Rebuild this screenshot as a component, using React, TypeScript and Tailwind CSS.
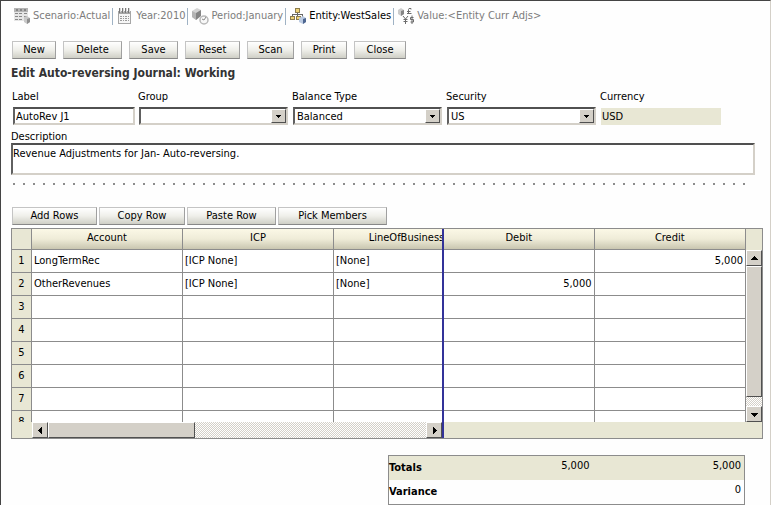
import React, { useState } from "react";

const povItems = [
  { id: "scenario", text: "Scenario:Actual", active: false },
  { id: "year", text: "Year:2010", active: false },
  { id: "period", text: "Period:January", active: false },
  { id: "entity", text: "Entity:WestSales", active: true },
  { id: "value", text: "Value:<Entity Curr Adjs>", active: false },
];

const actions = [
  { name: "New", width: "w-11" },
  { name: "Delete", width: "w-[59px]" },
  { name: "Save", width: "w-[49px]" },
  { name: "Reset", width: "w-[55px]" },
  { name: "Scan", width: "w-[47px]" },
  { name: "Print", width: "w-[46px]" },
  { name: "Close", width: "w-[52px]" },
];

const rowActions = [
  { name: "Add Rows", width: "w-[85px]" },
  { name: "Copy Row", width: "w-[86px]" },
  { name: "Paste Row", width: "w-[89px]" },
  { name: "Pick Members", width: "w-[109px]" },
];

const rows = [
  { account: "LongTermRec", icp: "[ICP None]", lob: "[None]", debit: "", credit: "5,000" },
  { account: "OtherRevenues", icp: "[ICP None]", lob: "[None]", debit: "5,000", credit: "" },
  { account: "", icp: "", lob: "", debit: "", credit: "" },
  { account: "", icp: "", lob: "", debit: "", credit: "" },
  { account: "", icp: "", lob: "", debit: "", credit: "" },
  { account: "", icp: "", lob: "", debit: "", credit: "" },
  { account: "", icp: "", lob: "", debit: "", credit: "" },
  { account: "", icp: "", lob: "", debit: "", credit: "" },
];

const sunken =
  "border-2 border-t-[#505050] border-l-[#606060] border-r-[#d4d0c8] border-b-[#d4d0c8] bg-white";
const raised =
  "border border-t-white border-l-white border-r-[#505050] border-b-[#505050] bg-[#d4d0c8]";
const track =
  "bg-[repeating-conic-gradient(#d4d0c8_0_25%,#ffffff_0_50%)] bg-[length:2px_2px]";
const headCell =
  "h-[21px] border-b border-[#8c8c8c] bg-linear-to-b from-[#fbf8e6] via-[#efecd8] to-[#c9c6b0] p-0 pb-0.5 text-center font-normal";
const cell = "h-[23px] border-b border-[#8c8c8c] p-0 truncate";

const PovIcon = ({ id }: { id: string }) => (
  <svg width="17" height="17" viewBox="0 0 17 17" className="shrink-0" shapeRendering="crispEdges">
    {id === "scenario" && (
      <>
        <path d="M0 0h14v4H0z" fill="#b5b5b5" />
        <path d="M2 1h2v2H2zM6 1h2v2H6zM10 1h2v2h-2z" fill="#858585" />
        <path d="M0 4h14v9H0z" fill="#e6e6e6" />
        <path d="M1 5h3v1H1zM5 5h3v1H5zM10 5h3v1h-3zM1 8h3v1H1zM5 8h3v1H5zM10 8h3v1h-3zM1 11h3v1H1zM5 11h3v1H5z" fill="#888888" />
        <g shapeRendering="auto">
          <path d="M10 9l3-1 3 2v4l-3 2-3-2z" fill="#c8c8c8" />
          <path d="M13 11l3-1v4l-3 2z" fill="#8f8f8f" />
        </g>
      </>
    )}
    {id === "year" && (
      <>
        <path d="M1 3h13v13H1z" fill="#a6a6a6" />
        <path d="M2 6h11v9H2z" fill="#f6f6f6" />
        <path d="M2 0h1v5H2zM5 0h1v5H5zM8 0h1v5H8zM11 0h1v5h-1z" fill="#777777" />
        <path d="M3 0h1v4H3zM6 0h1v4H6zM9 0h1v4H9zM12 0h1v4h-1z" fill="#d8d8d8" />
        <path d="M3 8h2v1H3zM6 8h1v1H6zM8 8h2v1H8zM11 8h1v1h-1zM3 10h2v1H3zM6 10h1v1H6zM8 10h2v1H8zM11 10h1v1h-1zM3 12h2v1H3zM6 12h1v1H6zM8 12h2v1H8zM11 12h1v1h-1z" fill="#9a9a9a" />
      </>
    )}
    {id === "period" && (
      <g shapeRendering="auto">
        <path d="M0 3l5-3 4 2v6l-5 4-4-3z" fill="#d4d4d4" />
        <path d="M0 3l4 2v7L0 9z" fill="#b4b4b4" />
        <path d="M4 5l5-3v6l-5 4z" fill="#858585" />
        <circle cx="12" cy="12" r="4" fill="#f8f8f8" stroke="#b8b8b8" strokeWidth="1.5" />
        <path d="M10 11l2 1 2-3" fill="none" stroke="#888888" />
      </g>
    )}
    {id === "entity" && (
      <>
        <path d="M7 4h1v3H7zM2 6h11v1H2zM2 6h1v3H2zM7 6h1v3H7zM12 6h1v3h-1z" fill="#666666" />
        <path d="M5 0h5v5H5zM0 8h5v4H0zM6 8h5v4H6z" fill="#8c7c4c" />
        <path d="M6 1h3v3H6zM1 9h3v2H1zM7 9h3v2H7z" fill="#f0d478" />
        <g shapeRendering="auto">
          <path d="M9 10l4-2 3 2v4l-3 2-4-2z" fill="#bccbe2" />
          <path d="M13 11l3-1v4l-3 2z" fill="#4d6690" />
        </g>
      </>
    )}
    {id === "value" && (
      <g shapeRendering="auto" fill="none" stroke="#6c6c6c">
        <path d="M0 2l3-2 3 2v4L3 8 0 6z" fill="#cccccc" stroke="none" />
        <path d="M3 3l3-1v4L3 8z" fill="#858585" stroke="none" />
        <path d="M13 1.5V.5h-2l-.5 1v4M9 3.5h3.5M9 5.5h4.5" />
        <path d="M5 8l2.5 3L10 8M7.5 11v5M5.5 11.5h4M5.5 13.5h4" />
        <path d="M15.5 9.5h-3v2h3v2.5h-3M14 7.5v8.500" />
      </g>
    )}
  </svg>
);

const PushButton = ({ name, width }: { name: string; width: string }) => (
  <button
    className={`${width} h-[18px] border border-t-[#c4c4c4] border-l-[#c4c4c4] border-r-[#a0a0a0] border-b-[#888888] bg-linear-to-b from-white via-[#efefea] to-[#cfcfc6] text-center leading-4 whitespace-nowrap`}
  >
    {name}
  </button>
);

const Arrow = ({ dir }: { dir: "up" | "down" | "left" | "right" }) => (
  <svg width="7" height="7" viewBox="0 0 7 7" fill="#000000" shapeRendering="crispEdges">
    {dir === "up" && <path d="M3 1h1v1h1v1h1v1h1v1H0V4h1V3h1V2h1z" />}
    {dir === "down" && <path d="M0 2h7v1H6v1H5v1H4v1H3V5H2V4H1V3H0z" />}
    {dir === "left" && <path d="M5 0v7H4V6H3V5H2V4H1V3h1V2h1V1h1V0z" />}
    {dir === "right" && <path d="M2 0v7h1V6h1V5h1V4h1V3H5V2H4V1H3V0z" />}
  </svg>
);

const ScrollButton = ({ dir }: { dir: "up" | "down" | "left" | "right" }) => (
  <button
    aria-label={`Scroll ${dir}`}
    className={`${raised} flex h-4 w-4 shrink-0 items-center justify-center`}
  >
    <Arrow dir={dir} />
  </button>
);

const SelectField = ({ label, options }: { label: string; options: string[] }) => {
  const id = label.toLowerCase().replace(" ", "-");
  return (
    <div className="min-w-0 flex-[150]">
      <label htmlFor={id} className="block h-4 leading-3">
        {label}
      </label>
      <div className="relative ml-px">
        <select
          id={id}
          className={`${sunken} block h-[18px] w-full appearance-none pt-px pl-0.5 leading-[13px] outline-none`}
        >
          {options.map((o) => (
            <option key={o}>{o}</option>
          ))}
        </select>
        <span
          className={`${raised} pointer-events-none absolute top-0.5 right-0.5 flex h-3.5 w-[15px] items-center justify-center`}
        >
          <svg width="5" height="3" viewBox="0 0 5 3" shapeRendering="crispEdges">
            <path d="M0 0h5v1H4v1H3v1H2V2H1V1H0z" />
          </svg>
        </span>
      </div>
    </div>
  );
};

const JournalGrid = () => (
  <div className="grid grid-cols-[20px_minmax(0,410fr)_2px_minmax(0,301fr)_17px] border border-[#8c8c8c] bg-[#e8e7d4]">
    {/* ROW NUMBERS */}
    <div className="h-[193px] overflow-hidden border-r border-[#8c8c8c]">
      <table className="w-full table-fixed border-separate border-spacing-0">
        <thead>
          <tr>
            <th aria-label="Row" className="h-[21px] border-b border-[#8c8c8c] p-0" />
          </tr>
        </thead>
        <tbody>
          {rows.map((_, i) => (
            <tr key={i}>
              <td className="h-[23px] border-b border-[#8c8c8c] p-0 text-center">{i + 1}</td>
            </tr>
          ))}
        </tbody>
      </table>
    </div>

    {/* MEMBERS */}
    <div className="h-[193px] overflow-hidden bg-white">
      <table className="w-[453px] table-fixed border-separate border-spacing-0">
        <thead>
          <tr>
            <th className={`${headCell} border-r`}>Account</th>
            <th className={`${headCell} border-r`}>ICP</th>
            <th className={`${headCell} pr-1.5`}>LineOfBusiness</th>
          </tr>
        </thead>
        <tbody>
          {rows.map((r, i) => (
            <tr key={i}>
              <td className={`${cell} border-r pl-0.5`}>{r.account}</td>
              <td className={`${cell} border-r pl-0.5`}>{r.icp}</td>
              <td className={`${cell} border-r pl-0.5`}>{r.lob}</td>
            </tr>
          ))}
        </tbody>
      </table>
    </div>

    <div className="row-span-2 bg-[#333399]" />

    {/* AMOUNTS */}
    <div className="h-[193px] overflow-hidden bg-white">
      <table className="w-full table-fixed border-separate border-spacing-0">
        <thead>
          <tr>
            <th className={`${headCell} border-r`}>Debit</th>
            <th className={headCell}>Credit</th>
          </tr>
        </thead>
        <tbody>
          {rows.map((r, i) => (
            <tr key={i}>
              <td className={`${cell} border-r pr-0.5 text-right`}>{r.debit}</td>
              <td className={`${cell} pr-0.5 text-right`}>{r.credit}</td>
            </tr>
          ))}
        </tbody>
      </table>
    </div>

    <div className="flex h-[193px] flex-col border-l border-[#8c8c8c]">
      <div className="h-[21px] shrink-0" />
      <div className={`${track} flex grow flex-col`}>
        <ScrollButton dir="up" />
        <div className={`${raised} h-[131px]`} />
        <div className="grow" />
        <ScrollButton dir="down" />
      </div>
    </div>

    {/* HORIZONTAL SCROLL */}
    <div />
    <div className={`${track} flex h-4`}>
      <ScrollButton dir="left" />
      <div className={`${raised} w-[147px]`} />
      <div className="grow" />
      <ScrollButton dir="right" />
    </div>
    <div className="col-span-2" />
  </div>
);

const App: React.FC = () => {
  const [label, setLabel] = useState("AutoRev J1");
  const [description, setDescription] = useState(
    "Revenue Adjustments for Jan- Auto-reversing."
  );

  return (
    <div className="min-h-screen border-t border-r border-l border-t-[#444444] border-r-[#d4d0c8] border-l-[#444444] bg-[#fefefe] pr-[7px] pl-2.5 font-['DejaVu_Sans_Condensed','DejaVu_Sans',sans-serif] text-[11px] leading-4 text-black">
      {/* POINT OF VIEW */}
      <nav className="flex h-[30px] items-center pl-[3px]">
        {povItems.map((p, i) => (
          <a
            key={p.id}
            href="#"
            className={`flex items-center gap-0.5 whitespace-nowrap ${
              i > 0 ? "ml-0.5 border-l border-[#9fb2c4] pl-1" : ""
            } ${p.active ? "text-black" : "text-[#7c7c7c]"}`}
          >
            <PovIcon id={p.id} />
            {p.text}
          </a>
        ))}
      </nav>

      <div className="flex gap-[7px] pt-2.5 pl-px">
        {actions.map((a) => (
          <PushButton key={a.name} {...a} />
        ))}
      </div>

      <h1 className="mt-1.5 text-[12px] leading-[17px] font-bold text-[#333333]">
        Edit Auto-reversing Journal: Working
      </h1>

      {/* JOURNAL HEADER */}
      <div className="mt-[9px] mr-[42px] flex gap-1 pl-px">
        <div className="min-w-0 flex-[122]">
          <label htmlFor="label" className="block h-4 leading-3">
            Label
          </label>
          <input
            id="label"
            value={label}
            onChange={(e) => setLabel(e.target.value)}
            className={`${sunken} ml-px block h-[18px] w-full pt-px pl-px leading-[13px] outline-none`}
          />
        </div>
        <SelectField label="Group" options={[""]} />
        <SelectField label="Balance Type" options={["Balanced", "Unbalanced"]} />
        <SelectField label="Security" options={["US"]} />
        <div className="min-w-0 flex-[121]">
          <span className="block h-4 leading-3">Currency</span>
          <output className="mt-px ml-px block h-[17px] bg-[#e8e7d4] pl-px leading-[18px]">
            USD
          </output>
        </div>
      </div>

      <label htmlFor="description" className="mt-1 block h-3.5 leading-4">
        Description
      </label>
      <textarea
        id="description"
        value={description}
        onChange={(e) => setDescription(e.target.value)}
        className={`${sunken} block h-8 w-full max-w-[calc(100%-8px)] resize-none overflow-hidden pt-px leading-4 outline-none`}
      />

      <div className="mt-2 mr-4 ml-0.5 h-0.5 bg-[repeating-linear-gradient(90deg,#8c8c8c_0_2px,transparent_2px_10px)]" />

      <div className="mt-[22px] mb-[3px] flex gap-0.5 pl-px">
        {rowActions.map((a) => (
          <PushButton key={a.name} {...a} />
        ))}
      </div>

      <JournalGrid />

      {/* TOTALS */}
      <table className="mt-4 mr-[18px] ml-auto w-[357px] table-fixed border border-[#8c8c8c]">
        <tbody>
          <tr className="bg-[#e8e7d4]">
            <th className="h-6 p-0 text-left">Totals</th>
            <td className="w-[100px] p-0 pb-1 text-right">5,000</td>
            <td className="w-[155px] p-0 pr-[3px] pb-1 text-right">5,000</td>
          </tr>
          <tr>
            <th className="h-[25px] p-0 text-left">Variance</th>
            <td className="p-0" />
            <td className="p-0 pr-[3px] pb-1 text-right">0</td>
          </tr>
        </tbody>
      </table>
    </div>
  );
};

export default App;
